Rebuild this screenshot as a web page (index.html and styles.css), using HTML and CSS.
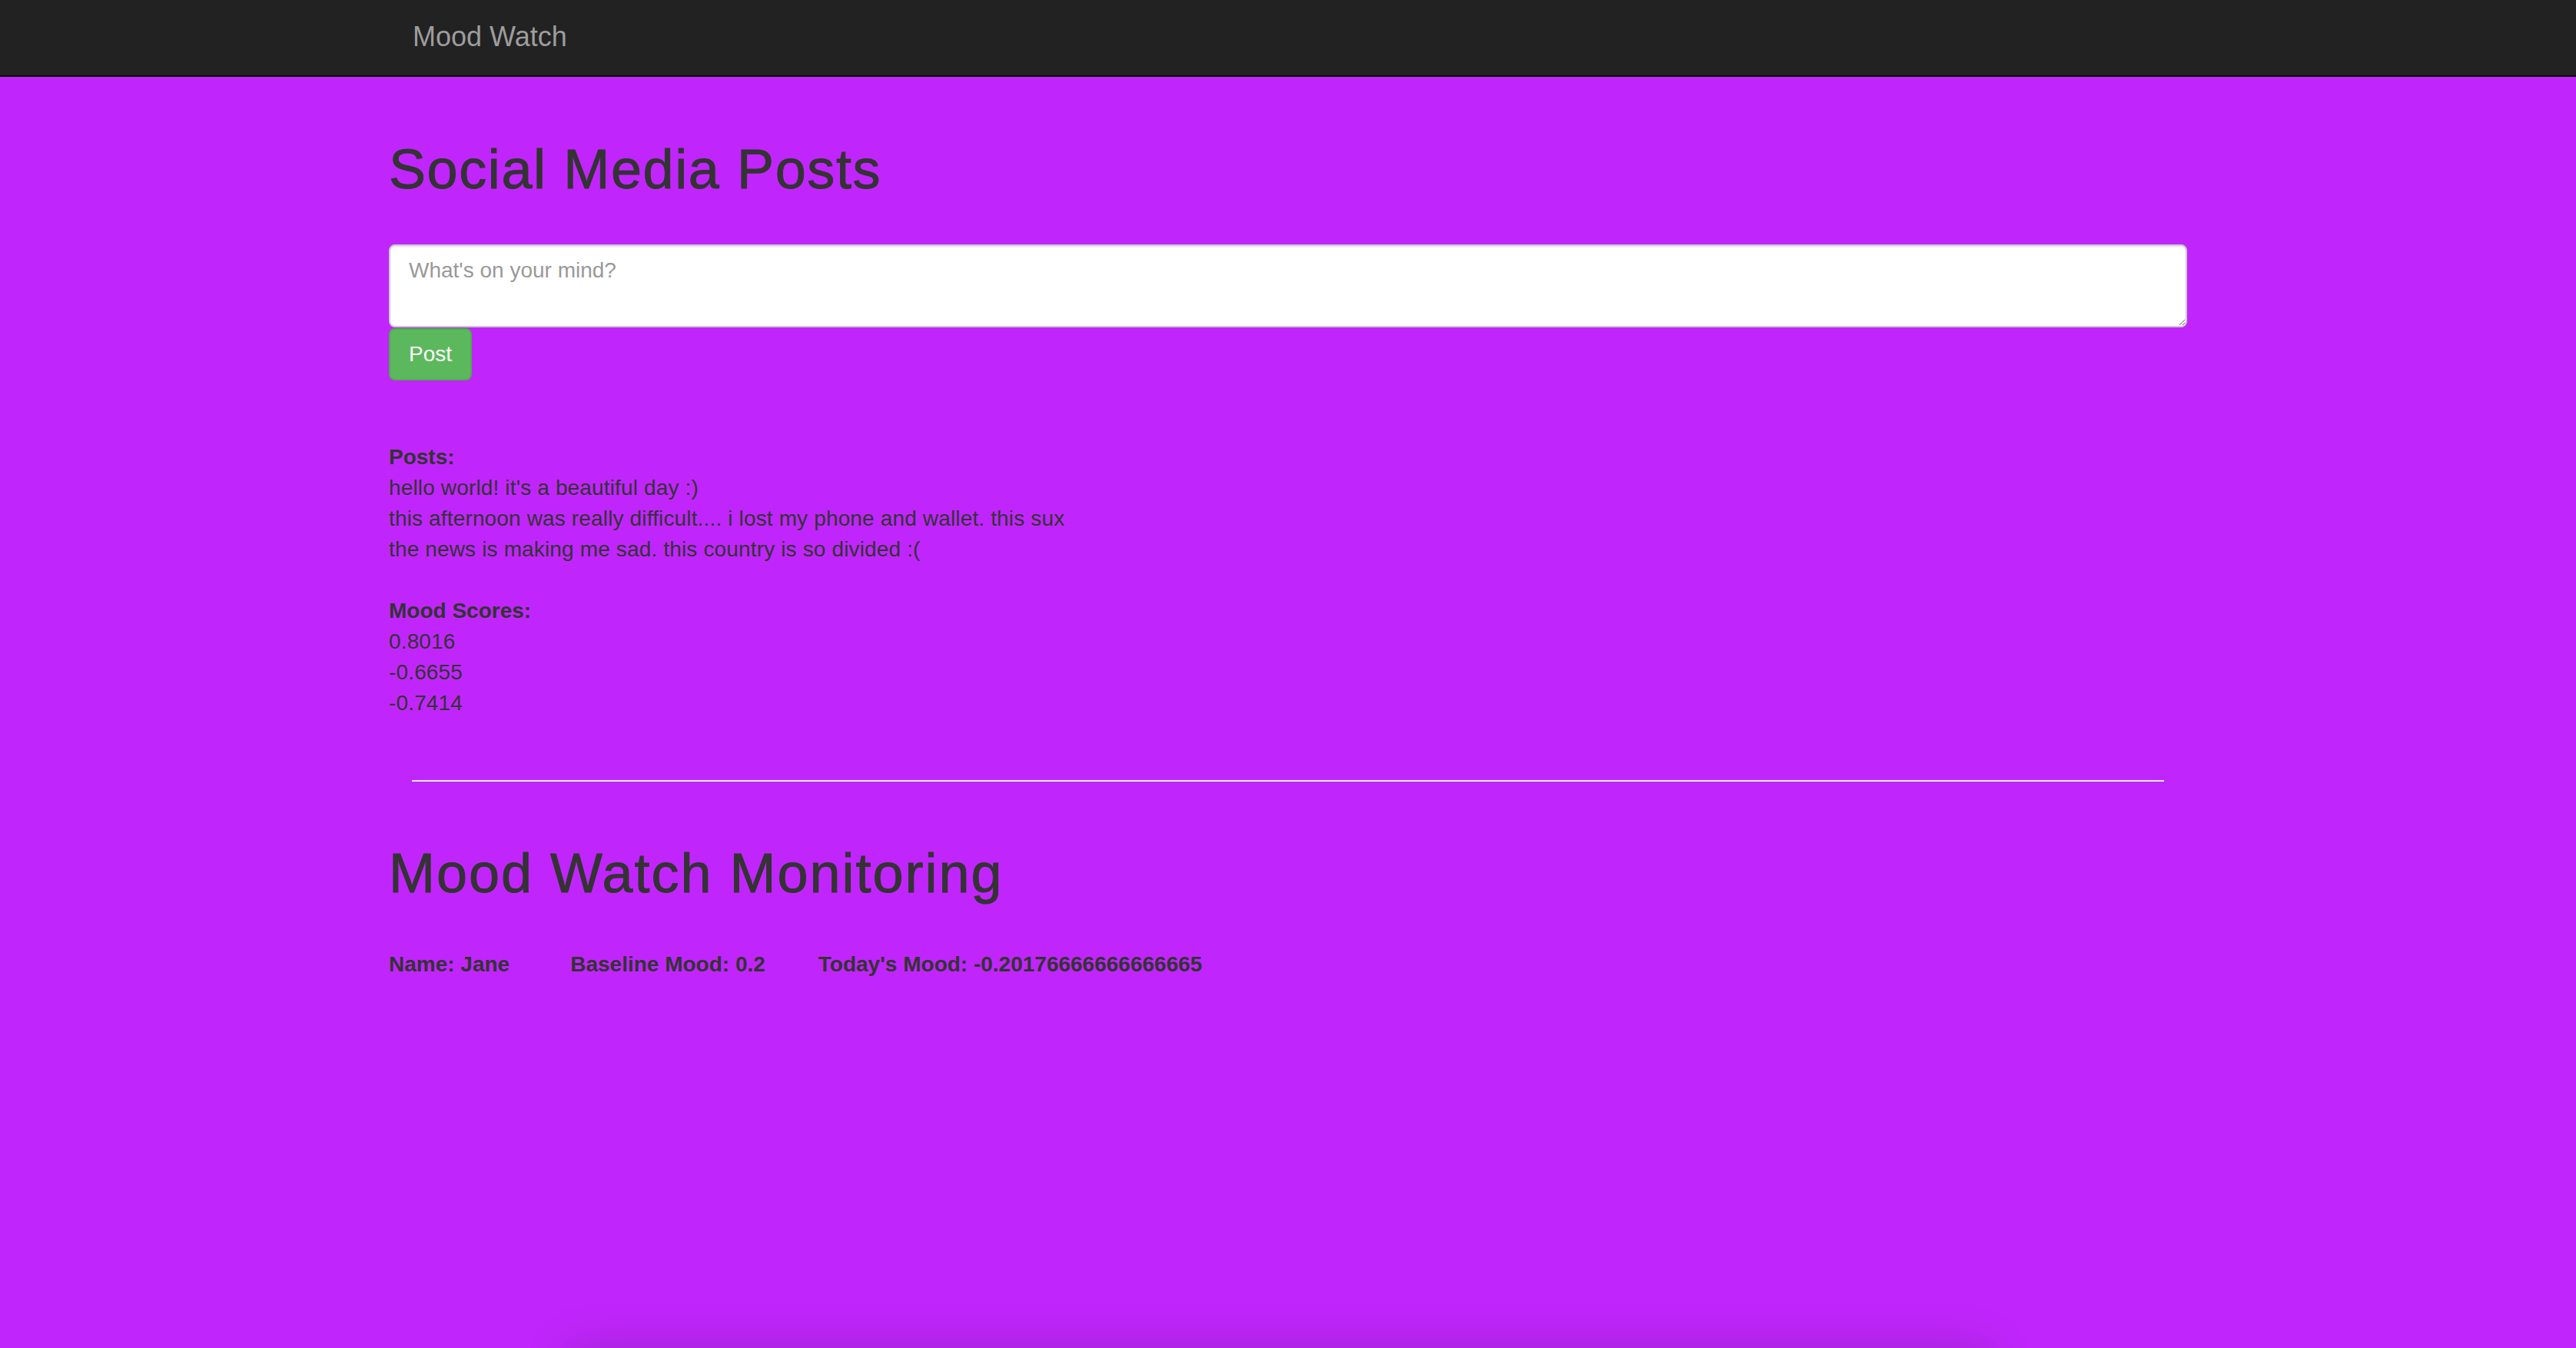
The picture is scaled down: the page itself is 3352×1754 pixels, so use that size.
FILE: index.html
```html
<!DOCTYPE html>
<html lang="en">
<head>
<meta charset="utf-8">
<title>Mood Watch</title>
<link rel="stylesheet" href="styles.css">
</head>
<body>
<nav class="navbar">
  <div class="container">
    <a class="brand" href="#">Mood Watch</a>
  </div>
</nav>
<main class="container main">
  <h1 class="title">Social Media Posts</h1>
  <form class="post-form">
    <textarea class="input" rows="2" placeholder="What's on your mind?"></textarea>
    <button type="button" class="btn">Post</button>
  </form>
  <section class="posts">
    <div class="label">Posts:</div>
    <div>hello world! it's a beautiful day :)</div>
    <div>this afternoon was really difficult.... i lost my phone and wallet. this sux</div>
    <div>the news is making me sad. this country is so divided :(</div>
    <div class="label spaced">Mood Scores:</div>
    <div>0.8016</div>
    <div>-0.6655</div>
    <div>-0.7414</div>
  </section>
  <hr class="divider">
  <h1 class="title monitor">Mood Watch Monitoring</h1>
  <div class="info">
    <span class="info-item first">Name: Jane</span>
    <span class="info-item second">Baseline Mood: 0.2</span>
    <span class="info-item">Today's Mood: -0.20176666666666665</span>
  </div>
</main>
<div class="shade"></div>
</body>
</html>
```

FILE: styles.css
```css
html, body {
  margin: 0;
  padding: 0;
}
body {
  background: #c026fb;
  color: #333333;
  font-family: "Liberation Sans", Arial, Helvetica, sans-serif;
  font-size: 28px;
  line-height: 40px;
  overflow: hidden;
  height: 1754px;
}
.container {
  width: 2340px;
  margin: 0 auto;
}
.navbar {
  background: #222222;
  height: 98px;
  border-bottom: 2px solid #080808;
}
.navbar .container {
  display: flex;
  align-items: flex-start;
}
.brand {
  display: block;
  color: #9d9d9d;
  text-decoration: none;
  font-size: 36px;
  line-height: 40px;
  padding: 28px 0 0 31px;
}
.main {
  padding-top: 41px;
}
.title {
  font-size: 72px;
  line-height: 79px;
  font-weight: 500;
  letter-spacing: 1.6px;
  -webkit-text-stroke: 0.9px #333333;
  margin: 40px 0 58px;
  color: #333333;
}
.post-form {
  display: flex;
  flex-direction: column;
  align-items: flex-start;
  margin: 0;
}
.input {
  display: block;
  box-sizing: border-box;
  width: 100%;
  height: 108px;
  padding: 12px 24px;
  border: 2px solid #cccccc;
  border-radius: 8px;
  background: #ffffff;
  box-shadow: inset 0 2px 2px rgba(0, 0, 0, 0.075);
  font-family: inherit;
  font-size: 28px;
  line-height: 40px;
  color: #555555;
  margin: 0;
  resize: vertical;
}
.input::placeholder {
  color: #999999;
}
.btn {
  margin-top: 1px;
  box-sizing: border-box;
  height: 68px;
  padding: 12px 24px;
  border: 2px solid #4cae4c;
  border-radius: 8px;
  background: #5cb85c;
  color: #ffffff;
  font-family: inherit;
  font-size: 28px;
  line-height: 40px;
}
.posts {
  margin-top: 80px;
  letter-spacing: 0.15px;
}
.label {
  font-weight: bold;
  letter-spacing: 0;
}
.label.spaced {
  margin-top: 40px;
}
.divider {
  border: 0;
  border-top: 2px solid #eeeeee;
  margin: 80px 30px 0;
  height: 0;
}
.title.monitor {
  letter-spacing: 2px;
  margin: 80px 0 59px;
}
.info {
  display: flex;
  font-weight: bold;
}
.info-item.first {
  margin-right: 79px;
}
.info-item.second {
  margin-right: 69px;
}
.shade {
  position: fixed;
  left: 740px;
  width: 1850px;
  bottom: -80px;
  height: 80px;
  box-shadow: 0 0 60px 0 rgba(0, 0, 0, 0.17);
}
```
